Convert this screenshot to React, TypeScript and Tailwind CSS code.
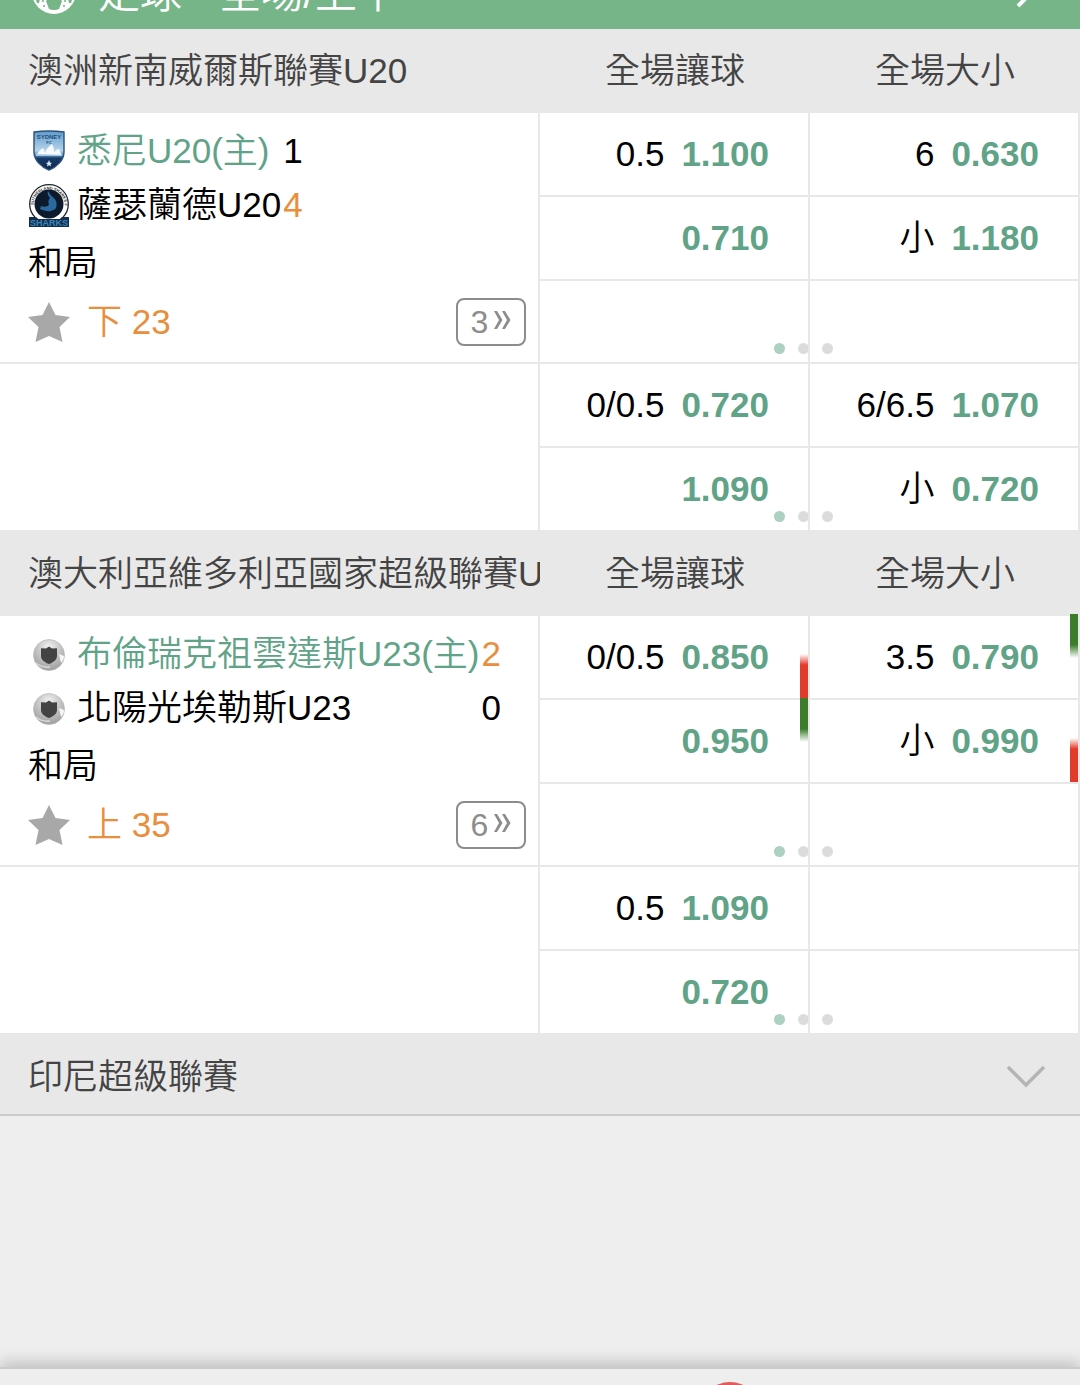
import React from "react";

type Trend = "up" | "down";
type Cell = { line?: string; odds?: string; trend?: Trend };
type Team = { name: string; score: number; home?: boolean; leading?: boolean; logo: React.ReactNode };
type League = {
  name: string;
  teams: Team[];
  clock: string;
  more: number;
  main: Cell[][];
  extra: Cell[][];
};

function SydneyLogo() {
  return (
    <svg viewBox="0 0 42 46" className="h-[46px] w-[42px]" aria-hidden="true">
      <defs>
        <linearGradient id="sky" x1="0" y1="0" x2="0" y2="1">
          <stop offset="0" stopColor="#5f9ccb" />
          <stop offset="0.5" stopColor="#b4d3ea" />
          <stop offset="0.62" stopColor="#5a93c6" />
          <stop offset="0.7" stopColor="#173a66" />
          <stop offset="1" stopColor="#10294d" />
        </linearGradient>
      </defs>
      <path d="M6 4Q21 2 36 4V24C36 32 29 39 21 42C13 39 6 32 6 24Z" fill="url(#sky)" stroke="#2d4f7c" strokeWidth="1.4" />
      <text x="21" y="11" textAnchor="middle" fontFamily="Liberation Sans" fontWeight="700" fontSize="6" fill="#1f4a7d">SYDNEY</text>
      <text x="21" y="16" textAnchor="middle" fontFamily="Liberation Sans" fontWeight="700" fontSize="4" fill="#1f4a7d">FC</text>
      <path d="M9 26C11 23 13 21 15 20C16 22 17 23 17 25C18 21 21 18 24 16C26 19 26 22 26 24C28 22 30 21 31 21C32 23 33 25 33 27Z" fill="#f6fafd" />
      <path d="M8 27H34" stroke="#dcebf6" strokeWidth="1.200" />
      <path d="M21 32L22 34.500L24 35L22.500 36.200L23 38.500L21 37.200L19 38.500L19.500 36.200L18 35L20 34.500Z" fill="#d7e6f4" />
    </svg>
  );
}

function SharksLogo() {
  return (
    <svg viewBox="0 0 42 46" className="h-[46px] w-[42px]" aria-hidden="true">
      <defs>
        <path id="ring" d="M5.500 23A15.500 15.500 0 0 1 36.500 23" />
      </defs>
      <circle cx="21" cy="22" r="19.300" fill="#fff" stroke="#1d242c" strokeWidth="1.300" />
      <circle cx="21" cy="22" r="14.500" fill="#0c1a2b" />
      <text fontFamily="Liberation Sans" fontWeight="700" fontSize="4" fill="#222">
        <textPath href="#ring">SUTHERLAND SHARKS FC</textPath>
      </text>
      <path d="M20 9C22 12 23 14 26 16C29 19 29 23 28 26C25 30 18 30 12 27L13 24C16 25 19 25 21 23C20 20 20 18 22 16C20 14 19 11 20 9Z" fill="#2a6a9f" />
      <path d="M1 35H8L10 37H32L34 35H41V45H1Z" fill="#12304e" />
      <text x="21" y="44" textAnchor="middle" fontFamily="Liberation Sans" fontWeight="700" fontSize="9" fill="#3b83b8">SHARKS</text>
    </svg>
  );
}

function DefaultLogo({ id }: { id: string }) {
  return (
    <svg viewBox="0 0 42 46" className="h-[46px] w-[42px]" aria-hidden="true">
      <defs>
        <radialGradient id={id} cx="0.5" cy="0.25" r="0.8">
          <stop offset="0" stopColor="#f2f2f2" />
          <stop offset="0.5" stopColor="#c2c2c2" />
          <stop offset="1" stopColor="#9a9a9a" />
        </radialGradient>
      </defs>
      <circle cx="21" cy="24" r="15.500" fill={`url(#${id})`} stroke="#b4b4b4" strokeWidth="0.600" />
      <path d="M31 23L36 25C36 28 35 30 33 32Z" fill="#f6f6f6" />
      <path d="M8 32Q14 37 22 36" stroke="#d8d8d8" strokeWidth="1.500" fill="none" />
      <path d="M21 15.500L24 17.500L29 17.300V25C29 29 25 31.500 21 33C17 31.500 13 29 13 25V17.300L18 17.500Z" fill="#434343" />
    </svg>
  );
}

const leagues: League[] = [
  {
    name: "澳洲新南威爾斯聯賽U20",
    teams: [
      { name: "悉尼U20(主)", score: 1, home: true, logo: <SydneyLogo /> },
      { name: "薩瑟蘭德U20", score: 4, leading: true, logo: <SharksLogo /> },
    ],
    clock: "下 23",
    more: 3,
    main: [
      [{ line: "0.5", odds: "1.100" }, { line: "6", odds: "0.630" }],
      [{ odds: "0.710" }, { line: "小", odds: "1.180" }],
      [{}, {}],
    ],
    extra: [
      [{ line: "0/0.5", odds: "0.720" }, { line: "6/6.5", odds: "1.070" }],
      [{ odds: "1.090" }, { line: "小", odds: "0.720" }],
    ],
  },
  {
    name: "澳大利亞維多利亞國家超級聯賽U23",
    teams: [
      { name: "布倫瑞克祖雲達斯U23(主)", score: 2, home: true, leading: true, logo: <DefaultLogo id="ball-a" /> },
      { name: "北陽光埃勒斯U23", score: 0, logo: <DefaultLogo id="ball-b" /> },
    ],
    clock: "上 35",
    more: 6,
    main: [
      [{ line: "0/0.5", odds: "0.850", trend: "up" }, { line: "3.5", odds: "0.790", trend: "down" }],
      [{ odds: "0.950", trend: "down" }, { line: "小", odds: "0.990", trend: "up" }],
      [{}, {}],
    ],
    extra: [
      [{ line: "0.5", odds: "1.090" }, {}],
      [{ odds: "0.720" }, {}],
    ],
  },
];

function OddsCell({ line, odds, trend }: Cell) {
  return (
    <div className="relative flex items-center justify-end gap-[17px] border-r-2 border-b-2 border-[#e8e8e8] pr-[39px]">
      {line && <span className="text-black">{line}</span>}
      {odds && <button type="button" className="font-bold text-[#60a387]">{odds}</button>}
      {trend === "up" && (
        <span className="absolute right-0 bottom-0 h-11 w-2 bg-linear-to-t from-[#e23a2b] from-75% to-transparent" />
      )}
      {trend === "down" && (
        <span className="absolute -top-0.5 right-0 h-11 w-2 bg-linear-to-b from-[#3b7d2a] from-70% to-transparent" />
      )}
    </div>
  );
}

function Odds({ rows }: { rows: Cell[][] }) {
  return (
    <div className="relative isolate bg-white">
      {rows.map((row, i) => (
        <div key={i} className={i === 2 ? "grid h-[83px] grid-cols-2" : "grid h-[84px] grid-cols-2"}>
          {row.map((cell, j) => (
            <OddsCell key={j} {...cell} />
          ))}
        </div>
      ))}
      <div className="absolute inset-x-0 bottom-[10px] -z-10 flex justify-center gap-[13px] pr-3.5">
        <span className="size-[11px] rounded-full bg-[#acd0c1]" />
        <span className="size-[11px] rounded-full bg-[#dcdcdc]" />
        <span className="size-[11px] rounded-full bg-[#dcdcdc]" />
      </div>
    </div>
  );
}

function LeagueBlock({ league }: { league: League }) {
  return (
    <section>
      <header className="grid h-[84px] grid-cols-[2fr_1fr_1fr] items-center bg-[#e8e8e8] text-[#444]">
        <h2 className="overflow-hidden pl-7 font-[350] whitespace-nowrap">{league.name}</h2>
        <span className="text-center">全場讓球</span>
        <span className="text-center">全場大小</span>
      </header>
      <div className="grid grid-cols-2">
        <div className="flex flex-col border-r-2 border-b-2 border-[#e8e8e8] bg-white pt-[11px] pr-3 pl-7">
          <div className="grid grid-cols-[49px_auto_auto] items-center justify-start">
            {league.teams.map((team) => (
              <React.Fragment key={team.name}>
                <span className="flex h-[54px] items-center">{team.logo}</span>
                <span className={team.home ? "pr-0.5 whitespace-nowrap text-[#60a387]" : "pr-0.5 whitespace-nowrap text-black"}>{team.name}</span>
                <span className={team.leading ? "text-[#e88e3c]" : "text-black"}>{team.score}</span>
              </React.Fragment>
            ))}
          </div>
          <div className="flex h-[62px] items-center text-black">和局</div>
          <div className="flex h-14 items-center">
            <button type="button" aria-label="收藏" className="mr-[17px]">
              <svg viewBox="0 0 42 40" className="h-10 w-[42px]" aria-hidden="true">
                <path d="M21 0L27.500 13L42 15L31.500 25L34.500 40L21 34L7.500 40L10.500 25L0 15L14.500 13Z" fill="#a8a8a8" />
              </svg>
            </button>
            <span className="flex-1 text-[#e88e3c]">{league.clock}</span>
            <button
              type="button"
              className="flex h-12 w-[70px] items-center justify-center gap-1.5 rounded-lg border-2 border-[#8c8c8c] text-[32px] text-[#8c8c8c]"
            >
              {league.more}
              <svg viewBox="0 0 17 18" className="mb-1 h-[18px] w-[17px]" aria-hidden="true">
                <path d="M0 0H3L8.500 9L3 18H0L5 9ZM8 0H11L16.500 9L11 18H8L13 9Z" fill="#8c8c8c" />
              </svg>
            </button>
          </div>
        </div>
        <Odds rows={league.main} />
        <div className="border-r-2 border-b-2 border-[#e8e8e8] bg-white" />
        <Odds rows={league.extra} />
      </div>
    </section>
  );
}

export default function App() {
  return (
    <div className="flex min-h-screen flex-col bg-[#eee] font-['Liberation_Sans','Noto_Sans_CJK_TC',sans-serif] text-[35px] leading-[42px] font-[350]">
      <header className="flex h-[29px] items-end overflow-hidden bg-[#76b587] pr-10 pl-8 text-[42px] leading-[50px] text-white">
        <svg viewBox="0 0 44 44" className="mr-[22px] mb-[15px] size-11 shrink-0" aria-hidden="true">
          <circle cx="22" cy="22" r="22" fill="#fff" />
          <path d="M14 31L17 28H27L30 31L27 39Q22 41 17 39Z" fill="#76b587" />
          <path d="M22 12L29 17L26 24H18L15 17Z" fill="#76b587" />
          <path d="M3 27L8 29L7 33L5 33ZM41 27L36 29L37 33L39 33Z" fill="#76b587" />
          <circle cx="12" cy="36" r="1" fill="#76b587" />
          <circle cx="32" cy="36" r="1" fill="#76b587" />
          <circle cx="11" cy="31" r="1" fill="#76b587" />
          <circle cx="33" cy="31" r="1" fill="#76b587" />
        </svg>
        <h1 className="flex-1 pb-[10px] font-[350] whitespace-nowrap">足球 - 全場/上半</h1>
        <svg viewBox="0 0 24 40" className="mb-[21px] h-10 w-6" aria-hidden="true">
          <path d="M2 2L20 20L2 38" fill="none" stroke="#fff" strokeWidth="4" />
        </svg>
      </header>
      <main className="flex-1">
        {leagues.map((league) => (
          <LeagueBlock key={league.name} league={league} />
        ))}
        <button
          type="button"
          className="flex h-[81px] w-full items-center justify-between border-b-2 border-[#cbcbcb] bg-[#e8e8e8] pt-1 pr-[34px] pl-7 text-[#444]"
        >
          印尼超級聯賽
          <svg viewBox="0 0 40 24" className="h-6 w-10" aria-hidden="true">
            <path d="M2 2L20 20L38 2" fill="none" stroke="#b4b4b4" strokeWidth="3.500" />
          </svg>
        </button>
      </main>
      <footer className="flex h-[18px] justify-center border-t-2 border-[#cbcbcb] bg-[#eee] shadow-[0_-4px_16px_rgba(0,0,0,0.22)]">
        <div className="flex h-4 w-full justify-center overflow-hidden pt-[13px] pl-[380px]">
          <span className="size-[60px] shrink-0 rounded-full bg-[#e25b59]" />
        </div>
      </footer>
    </div>
  );
}
